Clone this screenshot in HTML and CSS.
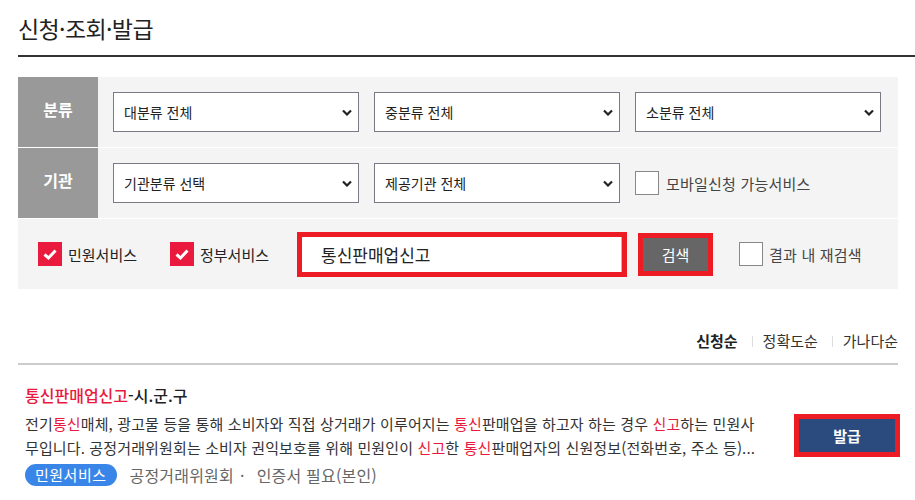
FILE: index.html
```html
<!DOCTYPE html>
<html lang="ko">
<head>
    <meta charset="UTF-8">
    <meta name="viewport" content="width=device-width, initial-scale=1.0">
    <title>신청·조회·발급</title>
    <link rel="stylesheet" href="styles.css">
</head>
<body>
    <div class="page">
        <!-- 제목 -->
        <h2 class="page-title">신청·조회·발급</h2>

        <!-- 검색 필터 -->
        <div class="filter">
            <div class="filter-row">
                <div class="filter-label">분류</div>
                <div class="filter-body">
                    <div class="select"><span>대분류 전체</span><svg width="10" height="7" viewBox="0 0 10 7"><path d="M1 1.5 L5 5.5 L9 1.5" fill="none" stroke="#222" stroke-width="2.2"/></svg></div>
                    <div class="select"><span>중분류 전체</span><svg width="10" height="7" viewBox="0 0 10 7"><path d="M1 1.5 L5 5.5 L9 1.5" fill="none" stroke="#222" stroke-width="2.2"/></svg></div>
                    <div class="select"><span>소분류 전체</span><svg width="10" height="7" viewBox="0 0 10 7"><path d="M1 1.5 L5 5.5 L9 1.5" fill="none" stroke="#222" stroke-width="2.2"/></svg></div>
                </div>
            </div>
            <div class="filter-row">
                <div class="filter-label">기관</div>
                <div class="filter-body">
                    <div class="select"><span>기관분류 선택</span><svg width="10" height="7" viewBox="0 0 10 7"><path d="M1 1.5 L5 5.5 L9 1.5" fill="none" stroke="#222" stroke-width="2.2"/></svg></div>
                    <div class="select"><span>제공기관 전체</span><svg width="10" height="7" viewBox="0 0 10 7"><path d="M1 1.5 L5 5.5 L9 1.5" fill="none" stroke="#222" stroke-width="2.2"/></svg></div>
                    <label class="check">
                        <span class="box"></span>
                        <span class="check-text">모바일신청 가능서비스</span>
                    </label>
                </div>
            </div>
            <div class="filter-row search-row">
                <label class="check">
                    <span class="box on"><svg width="24" height="24" viewBox="0 0 24 24"><path d="M6.5 12.5 L10.5 16 L17.5 8.5" fill="none" stroke="#fff" stroke-width="3"/></svg></span>
                    <span class="check-text dark">민원서비스</span>
                </label>
                <label class="check gap-l">
                    <span class="box on"><svg width="24" height="24" viewBox="0 0 24 24"><path d="M6.5 12.5 L10.5 16 L17.5 8.5" fill="none" stroke="#fff" stroke-width="3"/></svg></span>
                    <span class="check-text dark">정부서비스</span>
                </label>
                <div class="search-input">통신판매업신고</div>
                <button class="search-btn">검색</button>
                <label class="check gap-r">
                    <span class="box"></span>
                    <span class="check-text">결과 내 재검색</span>
                </label>
            </div>
        </div>

        <!-- 정렬 -->
        <div class="sort">
            <a class="active">신청순</a>
            <a>정확도순</a>
            <a>가나다순</a>
        </div>

        <!-- 결과 -->
        <div class="result">
            <div class="result-info">
                <div class="result-title"><em>통신판매업신고</em>-시.군.구</div>
                <p class="result-desc">전기<em>통신</em>매체, 광고물 등을 통해 소비자와 직접 상거래가 이루어지는 <em>통신</em>판매업을 하고자 하는 경우 <em>신고</em>하는 민원사무입니다. 공정거래위원회는 소비자 권익보호를 위해 민원인이 <em>신고</em>한 <em>통신</em>판매업자의 신원정보(전화번호, 주소 등)...</p>
                <div class="result-meta">
                    <span class="tag">민원서비스</span>
                    <span>공정거래위원회</span>
                    <span class="dot">·</span>
                    <span>인증서 필요(본인)</span>
                </div>
            </div>
            <button class="issue-btn">발급</button>
        </div>
    </div>
</body>
</html>
```

FILE: styles.css
```css
body {
    margin: 0;
    font-family: "Noto Sans CJK KR", "Noto Sans", sans-serif;
    color: #222;
    background: #fff;
}
.page {
    padding-left: 18px;
}
.page-title {
    margin: 0;
    padding: 12px 0 11px;
    font-size: 23px;
    line-height: 32px;
    font-weight: 400;
    letter-spacing: -0.6px;
    color: #222;
    border-bottom: 2px solid #333;
}

/* 필터 */
.filter {
    margin: 20px 17px 0 0;
    background: #f4f4f4;
}
.filter-row {
    display: flex;
    height: 70px;
    border-bottom: 1px solid #fff;
}
.filter-row:last-child {
    border-bottom: none;
}
.filter-label {
    width: 80px;
    background: #999;
    color: #fff;
    font-size: 16px;
    font-weight: 700;
    display: flex;
    justify-content: center;
    align-items: center;
    padding-bottom: 6px;
    box-sizing: border-box;
}
.filter-body {
    flex: 1;
    display: flex;
    align-items: center;
    gap: 15px;
    padding: 0 16px 0 15px;
}
.select {
    width: 246px;
    height: 40px;
    box-sizing: border-box;
    border: 1px solid #7a7985;
    background: #fff;
    display: flex;
    align-items: center;
    justify-content: space-between;
    padding: 0 6px 0 10px;
    font-size: 14px;
    color: #222;
}
.filter-body .check {
    flex: 1;
}
.check {
    display: flex;
    align-items: center;
    gap: 6px;
    cursor: pointer;
}
.box {
    width: 24px;
    height: 24px;
    box-sizing: border-box;
    border: 1px solid #888;
    background: #fff;
    display: block;
}
.box.on {
    border: none;
    background: #e91a3d;
}
.box svg {
    display: block;
}
.check-text {
    font-size: 15px;
    letter-spacing: 0.2px;
    color: #444;
}
.filter-body .check-text {
    margin-left: 1px;
}
.check-text.dark {
    color: #222;
    letter-spacing: 0;
}

.search-row {
    align-items: center;
    padding-left: 20px;
}
.gap-l {
    margin-left: 33px;
}
.search-input {
    margin-left: 33px;
    width: 320px;
    height: 35px;
    box-sizing: border-box;
    background: #fff;
    border-right: 1px solid #bbb;
    outline: 5px solid #ed1c24;
    padding-left: 19px;
    font-size: 17px;
    line-height: 35px;
    color: #222;
}
.search-btn {
    margin-left: 21px;
    width: 65px;
    height: 33px;
    border: none;
    background: #666;
    color: #fff;
    font-family: inherit;
    font-size: 15px;
    outline: 5px solid #ed1c24;
    cursor: pointer;
}
.gap-r {
    margin-left: 31px;
}

/* 정렬 */
.sort {
    margin: 42px 17px 0 0;
    padding-bottom: 12px;
    border-bottom: 2px solid #ccc;
    display: flex;
    justify-content: flex-end;
    font-size: 15px;
    line-height: 20px;
}
.sort a {
    color: #333;
    display: flex;
    align-items: center;
}
.sort a + a::before {
    content: "";
    width: 1px;
    height: 11px;
    background: #ddd;
    margin: 0 10px 0 14px;
}
.sort a.active {
    font-weight: 700;
    color: #222;
}

/* 결과 */
.result {
    display: flex;
    align-items: center;
    justify-content: space-between;
    padding: 18px 20px 0 7px;
}
.result-title {
    font-size: 16px;
    line-height: 24px;
    font-weight: 500;
    color: #222;
}
.result-title em,
.result-desc em {
    font-style: normal;
    color: #e91a3d;
}
.result-desc {
    margin: 5px 0 0;
    width: 738px;
    font-size: 15px;
    line-height: 24px;
    letter-spacing: 0.13px;
    color: #333;
}
.result-meta {
    margin-top: 3px;
    display: flex;
    align-items: center;
    font-size: 16px;
    letter-spacing: 0.2px;
    color: #666;
}
.tag {
    background: #3a86e8;
    color: #fff;
    font-size: 15px;
    letter-spacing: 0.5px;
    border-radius: 11px;
    height: 22px;
    line-height: 22px;
    padding: 0 10px;
    margin-right: 13px;
}
.dot {
    margin: 0 12px 0 6px;
}
.issue-btn {
    width: 96px;
    height: 33px;
    border: none;
    background: #2b4b7e;
    color: #fff;
    font-family: inherit;
    font-size: 15px;
    font-weight: 700;
    outline: 5px solid #ed1c24;
    cursor: pointer;
}
```
